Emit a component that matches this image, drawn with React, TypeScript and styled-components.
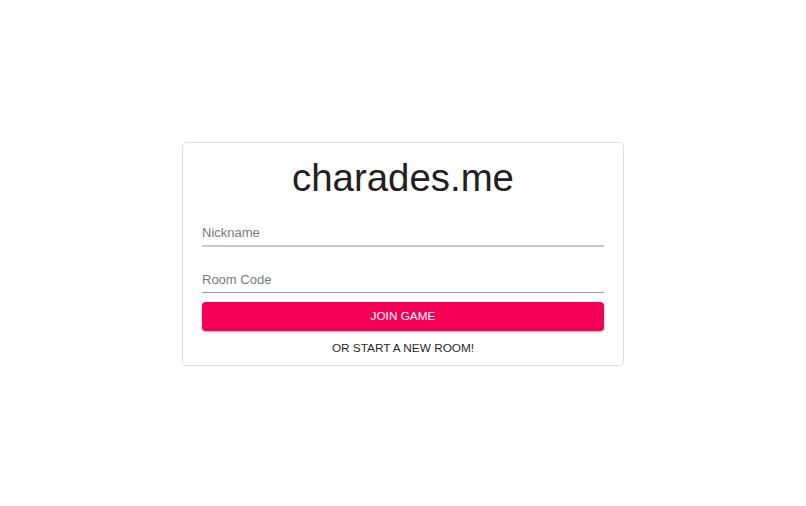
import React from "react";
import styled, { createGlobalStyle } from "styled-components";

const GlobalStyle = createGlobalStyle`
	body {
		margin: 0;
		background: #ffffff;
		font-family: "Liberation Sans", Arial, sans-serif;
	}
`;

function App() {
	return (
		<>
			<GlobalStyle />
			<Page>
				<Card>
					<Title>charades.me</Title>
					<Field $thick>
						<Input placeholder="Nickname" />
					</Field>
					<Field>
						<Input placeholder="Room Code" />
					</Field>
					<JoinButton>Join Game</JoinButton>
					<TextButton>Or start a new room!</TextButton>
				</Card>
			</Page>
		</>
	);
}

export default App;

const Page = styled.div`
	height: 506px;
	display: flex;
	align-items: center;
	justify-content: center;
`;

const Card = styled.div`
	box-sizing: border-box;
	width: 442px;
	margin-top: 2px;
	padding: 13px 19px 10px;
	border: 1px solid #e0e0e0;
	border-radius: 4px;
	display: flex;
	flex-direction: column;
`;

const Title = styled.h1`
	margin: 0 0 19px;
	font-size: 38.4px;
	font-weight: 400;
	line-height: 1.15;
	text-align: center;
	color: #212121;
`;

const Field = styled.div<{ $thick?: boolean }>`
	border-bottom: ${(p) => (p.$thick ? "2px solid #c8c8c8" : "1px solid #9e9e9e")};
	height: ${(p) => (p.$thick ? "24px" : "25px")};
	padding-top: ${(p) => (p.$thick ? "1px" : "0")};
	margin-bottom: 20px;
	display: flex;
	align-items: center;

	&:last-of-type {
		margin-bottom: 9px;
	}
`;

const Input = styled.input`
	width: 100%;
	border: none;
	outline: none;
	padding: 0;
	background: transparent;
	font-family: inherit;
	font-size: 13px;
	color: #212121;

	&::placeholder {
		color: #7a7a7a;
	}
`;

const JoinButton = styled.button`
	height: 29px;
	border: none;
	border-radius: 4px;
	background: #f50057;
	color: #ffffff;
	font-family: inherit;
	font-size: 11.8px;
	text-transform: uppercase;
	box-shadow: 0 1px 3px rgba(0, 0, 0, 0.2), 0 1px 1px rgba(0, 0, 0, 0.14);
	cursor: pointer;
`;

const TextButton = styled.button`
	margin-top: 10px;
	height: 14px;
	border: none;
	padding: 0;
	background: transparent;
	color: #2a2a2a;
	font-family: inherit;
	font-size: 11.8px;
	text-transform: uppercase;
	cursor: pointer;
`;
